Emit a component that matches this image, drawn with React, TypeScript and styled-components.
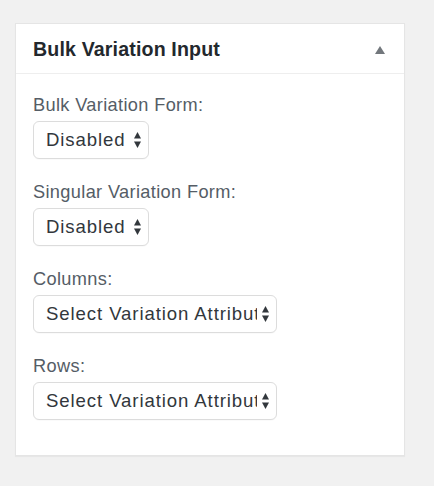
import React from "react";
import styled, { createGlobalStyle } from "styled-components";

const Global = createGlobalStyle`
  html, body { margin: 0; padding: 0; background: #f1f1f1; }
  body { font-family: "Liberation Sans", Arial, sans-serif; }
  * { box-sizing: border-box; }
`;

const Page = styled.div`
  padding: 23px 0 30px 15px;
`;

const Panel = styled.section`
  width: 390px;
  background: #ffffff;
  border: 1px solid #e5e5e5;
  box-shadow: 0 1px 1px rgba(0, 0, 0, 0.04);
`;

const Header = styled.header`
  height: 50px;
  display: flex;
  align-items: center;
  justify-content: space-between;
  padding: 2px 19px 0 17px;
  border-bottom: 1px solid #eeeeee;
`;

const Title = styled.h2`
  margin: 0;
  font-size: 19.6px;
  font-weight: 700;
  color: #23282d;
  letter-spacing: 0.15px;
`;

const Toggle = styled.svg`
  width: 10px;
  height: 8px;
  display: block;
  margin-top: 0;
`;

const Body = styled.div`
  display: flex;
  flex-direction: column;
  gap: 20px;
  padding: 18px 17px 35px;
`;

const Field = styled.div`
  display: flex;
  flex-direction: column;
  align-items: flex-start;
`;

const Label = styled.label`
  display: block;
  font-size: 18.2px;
  line-height: 26px;
  color: #555d66;
  letter-spacing: 0.35px;
`;

const SelectBox = styled.div<{ $width: number }>`
  margin-top: 3px;
  width: ${(p) => p.$width}px;
  height: 38px;
  display: flex;
  align-items: center;
  gap: 5px;
  padding: 0 7px 0 12px;
  border: 1px solid #dcdcdc;
  border-radius: 6px;
  background: #ffffff;
  box-shadow: 0 1px 0 rgba(0, 0, 0, 0.02);
  cursor: default;
`;

const Value = styled.span`
  flex: 1 1 auto;
  min-width: 0;
  overflow: hidden;
  white-space: nowrap;
  font-size: 18.6px;
  letter-spacing: 0.9px;
  color: #32373c;
`;

const Arrows = styled.svg`
  flex: none;
  width: 7px;
  height: 16px;
  display: block;
`;

type Row = { label: string; value: string; width: number };

const rows: Row[] = [
  { label: "Bulk Variation Form:", value: "Disabled", width: 116 },
  { label: "Singular Variation Form:", value: "Disabled", width: 116 },
  { label: "Columns:", value: "Select Variation Attribute", width: 244 },
  { label: "Rows:", value: "Select Variation Attribute", width: 244 },
];

export default function App() {
  return (
    <>
      <Global />
      <Page>
        <Panel>
          <Header>
            <Title>Bulk Variation Input</Title>
            <Toggle viewBox="0 0 10 8">
              <polygon points="5,0 10,8 0,8" fill="#72777c" />
            </Toggle>
          </Header>
          <Body>
            {rows.map((r, i) => (
              <Field key={i}>
                <Label>{r.label}</Label>
                <SelectBox $width={r.width} role="combobox" aria-label={r.label}>
                  <Value>{r.value}</Value>
                  <Arrows viewBox="0 0 7 16">
                    <polygon points="3.5,0 7,6.5 0,6.5" fill="#32373c" />
                    <polygon points="0,9.5 7,9.5 3.5,16" fill="#32373c" />
                  </Arrows>
                </SelectBox>
              </Field>
            ))}
          </Body>
        </Panel>
      </Page>
    </>
  );
}
